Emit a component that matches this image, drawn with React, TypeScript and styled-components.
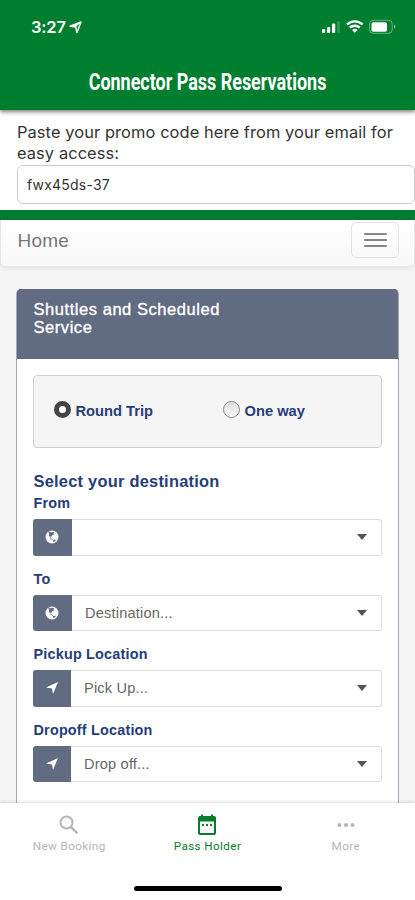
import React from 'react';
import styled, { createGlobalStyle } from 'styled-components';

const Global = createGlobalStyle`
  * { box-sizing: border-box; }
  body { margin: 0; background: #fff; font-family: "Liberation Sans", Arial, sans-serif; }
`;

const Screen = styled.div`
  width: 415px;
  height: 900px;
  display: flex;
  flex-direction: column;
  overflow: hidden;
  background: #f5f5f5;
`;

const Header = styled.header`
  flex: 0 0 110px;
  background: #007e2f;
  color: #fff;
  box-shadow: 0 2px 4px rgba(0, 0, 0, 0.5);
  z-index: 1;
`;

const StatusBar = styled.div`
  height: 54px;
  padding: 0 18px 0 31px;
  display: flex;
  align-items: center;
`;

const Clock = styled.span`
  font: 600 16.5px/20px Inter, sans-serif;
  letter-spacing: -0.2px;
  width: 38px;
  white-space: nowrap;
`;

const StatusIcons = styled.div`
  margin-left: auto;
  display: flex;
`;

const Title = styled.h1`
  margin: 12px 0 0;
  text-align: center;
  font: 700 24px/32px Roboto, sans-serif;
  white-space: nowrap;
  transform: scaleX(0.748);
`;

const Promo = styled.section`
  flex: 0 0 100px;
  padding: 12px 0 0 17px;
  background: #fff;
`;

const PromoLabel = styled.label`
  display: block;
  height: 43px;
  font: 400 16.4px/21px Inter, sans-serif;
  letter-spacing: 0.1px;
  color: #333;
  white-space: nowrap;
`;

const PromoInput = styled.div`
  height: 39px;
  padding-left: 9px;
  border: 1px solid #ccc;
  border-radius: 6px;
  font: 400 14px/38px Inter, sans-serif;
  letter-spacing: 0.2px;
  color: #333;
`;

const Divider = styled.div`
  flex: 0 0 10px;
  background: #007e2f;
`;

const Navbar = styled.nav`
  flex: 0 0 47px;
  display: flex;
  align-items: flex-start;
  justify-content: space-between;
  padding: 2px 15px 0 16.5px;
  border: solid #e7e7e7;
  border-width: 0 1px 1px;
  border-radius: 0 0 4px 4px;
  background: linear-gradient(#fff, #f8f8f8);
  box-shadow: 0 1px 5px rgba(0, 0, 0, 0.08);
`;

const Brand = styled.span`
  font-size: 19px;
  line-height: 38px;
  letter-spacing: 0.25px;
  color: #777;
`;

const MenuButton = styled.button`
  width: 48px;
  height: 36px;
  padding: 0;
  display: flex;
  flex-direction: column;
  align-items: center;
  justify-content: center;
  gap: 4px;
  border: 1px solid #e4e4e4;
  border-radius: 5px;
  background: transparent;
`;

const MenuLine = styled.span`
  width: 23px;
  height: 2px;
  border-radius: 1px;
  background: #858585;
`;

const Panel = styled.main`
  flex: 1 1 0;
  min-height: 0;
  margin: 22px 16px 0;
  border: solid #a3a6b8;
  border-width: 0 1px;
  border-radius: 5px 5px 0 0;
  background: linear-gradient(#616b82 70px, #fff 70px);
  overflow: hidden;
`;

const PanelHeading = styled.h2`
  height: 70px;
  margin: 0;
  padding: 11px 16px 0 16.5px;
  background: #616b82;
  color: #fff;
  font: 400 16.5px/18px "Liberation Sans", Arial, sans-serif;
  letter-spacing: 0.55px;
  -webkit-text-stroke: 0.35px #fff;
`;

const PanelBody = styled.div`
  padding: 16px 16px 0;
`;

const TripWell = styled.div`
  height: 73px;
  display: flex;
  align-items: center;
  padding: 0 0 2px 20px;
  border: 1px solid #d0d0d0;
  border-radius: 4px;
  background: #f5f5f5;
`;

const TripOption = styled.label<{ $width: number }>`
  width: ${p => p.$width}px;
  display: flex;
  align-items: center;
  gap: 4.5px;
  color: #263e78;
  font: 700 14.7px/18px "Liberation Sans", Arial, sans-serif;
  white-space: nowrap;
`;

const Radio = styled.span<{ $on?: boolean }>`
  width: 17px;
  height: 17px;
  margin-top: -3px;
  border-radius: 50%;
  border: ${p => (p.$on ? '5px solid #444' : '1px solid #888')};
  background: ${p => (p.$on ? '#fff' : 'linear-gradient(#ddd, #fafafa)')};
`;

const SectionTitle = styled.h3`
  margin: 23px 0 1px;
  padding-left: 0.5px;
  color: #263e78;
  font: 700 16.4px/20px "Liberation Sans", Arial, sans-serif;
  letter-spacing: 0.25px;
`;

const Field = styled.div`
  height: 75.6px;
`;

const FieldLabel = styled.div`
  height: 27px;
  padding: 2px 0 0 0.5px;
  color: #263e78;
  font: 700 14.4px/18px "Liberation Sans", Arial, sans-serif;
  letter-spacing: 0.2px;
`;

const SelectBox = styled.div`
  height: 36.5px;
  display: flex;
  align-items: center;
  border: 1px solid #ddd;
  border-left: 0;
  border-radius: 3px;
`;

const Addon = styled.span<{ $width: number }>`
  width: ${p => p.$width}px;
  height: 36.5px;
  margin: -1px 0;
  flex: none;
  display: flex;
  align-items: center;
  justify-content: center;
  border-radius: 3px 0 0 3px;
  background: #616b82;
`;

const Placeholder = styled.span`
  flex: 1;
  padding-left: 13.5px;
  color: #666;
  font-size: 14.6px;
  letter-spacing: 0.18px;
`;

const Caret = styled.span`
  margin-right: 14px;
  border: solid transparent;
  border-top-color: #555;
  border-width: 6px 5px 0;
`;

const TabBar = styled.footer`
  flex: 0 0 97px;
  display: flex;
  flex-direction: column;
  align-items: center;
  background: #fff;
  box-shadow: 0 -1px 3px rgba(0, 0, 0, 0.14);
  z-index: 1;
`;

const Tabs = styled.div`
  width: 100%;
  height: 83px;
  display: grid;
  grid-template-columns: repeat(3, 1fr);
`;

const Tab = styled.div<{ $active?: boolean }>`
  display: flex;
  flex-direction: column;
  align-items: center;
  padding-top: 10px;
  color: ${p => (p.$active ? '#087c2e' : '#b5b5b5')};
  font: 400 11.7px/14px Roboto, sans-serif;
  letter-spacing: 0.4px;
`;

const TabIcon = styled.svg`
  width: 24px;
  height: 24px;
  margin-bottom: 2px;
`;

const HomeIndicator = styled.div`
  width: 148px;
  height: 5px;
  border-radius: 3px;
  background: #000;
`;

const Globe = () => (
  <svg width="14" height="14" viewBox="0 0 14 14">
    <circle cx="7" cy="7" r="6.5" fill="#fff" />
    <path d="M3.2 2.4 5 1.4l1 1 1.8-.7 1.9 1.1-1.3.8.8 1-1.9.5-.4 1.4-1.2-.3-.3 1.2 1.6 1.1 1.2 1.7-1-.5-1.8-1.4-.7-1.6-1.1-1.6.7-1.2z" fill="#616b82" />
    <path d="m8 10.3 1.7-.8 1.2.4-1 1.5-1.7.7z" fill="#616b82" />
  </svg>
);

const Arrow = () => (
  <svg width="14" height="14" viewBox="0 0 14 14">
    <path d="M13 1 8 13 7 7.5 1 6.6z" fill="#fff" />
  </svg>
);

const fields = [
  { label: 'From', text: '', globe: true },
  { label: 'To', text: 'Destination...', globe: true },
  { label: 'Pickup Location', text: 'Pick Up...', globe: false },
  { label: 'Dropoff Location', text: 'Drop off...', globe: false },
];

export default function App() {
  return (
    <Screen>
      <Global />
      <Header>
        <StatusBar>
          <Clock>3:27</Clock>
          <svg width="13" height="13" viewBox="0 0 13 13">
            <path d="M12 1 7.8 11.7 6.8 6 1 5.2z" fill="none" stroke="#fff" strokeWidth="1.4" strokeLinejoin="round" />
            <path d="M12 1 1 5.2l5.8.8z" fill="#fff" />
          </svg>
          <StatusIcons>
            <svg width="75" height="16" viewBox="0 0 75 16">
              <g fill="#fff">
                <rect x="0" y="10" width="3.2" height="4" rx="1" />
                <rect x="5" y="8" width="3.2" height="6" rx="1" />
                <rect x="10" y="4.5" width="3.2" height="9.5" rx="1" />
                <rect x="15" y="2" width="3" height="12" rx="1" opacity=".18" />
                <path d="m32.8 13.8-2.8-2.7a4 4 0 0 1 5.6 0z" />
                <rect x="49.5" y="3.2" width="15.5" height="9.5" rx="1.8" />
              </g>
              <path d="M25 5.5a11.2 11.2 0 0 1 15.6 0M27.8 8.7a7.2 7.2 0 0 1 10 0" fill="none" stroke="#fff" strokeWidth="2.4" />
              <rect x="47.6" y="1.3" width="22.6" height="13" rx="3.6" fill="none" stroke="#fff" strokeOpacity=".4" />
              <path d="M72 5.5q3 2.2 0 4.4z" fill="#fff" opacity=".5" />
            </svg>
          </StatusIcons>
        </StatusBar>
        <Title>Connector Pass Reservations</Title>
      </Header>

      <Promo>
        <PromoLabel>
          Paste your promo code here from your email for<br />easy access:
        </PromoLabel>
        <PromoInput>fwx45ds-37</PromoInput>
      </Promo>
      <Divider />

      <Navbar>
        <Brand>Home</Brand>
        <MenuButton aria-label="Menu">
          <MenuLine /><MenuLine /><MenuLine />
        </MenuButton>
      </Navbar>

      <Panel>
        <PanelHeading>Shuttles and Scheduled<br />Service</PanelHeading>
        <PanelBody>
          <TripWell>
            <TripOption $width={169}><Radio $on />Round Trip</TripOption>
            <TripOption $width={100}><Radio />One way</TripOption>
          </TripWell>
          <SectionTitle>Select your destination</SectionTitle>
          {fields.map(f => (
            <Field key={f.label}>
              <FieldLabel>{f.label}</FieldLabel>
              <SelectBox>
                <Addon $width={f.globe ? 38.5 : 37.5}>{f.globe ? <Globe /> : <Arrow />}</Addon>
                <Placeholder>{f.text}</Placeholder>
                <Caret />
              </SelectBox>
            </Field>
          ))}
        </PanelBody>
      </Panel>

      <TabBar>
        <Tabs>
          <Tab>
            <TabIcon viewBox="0 0 24 24">
              <circle cx="9.5" cy="9.5" r="6" fill="none" stroke="currentColor" strokeWidth="2" />
              <path d="m13.8 13.8 6.7 6.7" stroke="currentColor" strokeWidth="2.4" />
            </TabIcon>
            New Booking
          </Tab>
          <Tab $active>
            <TabIcon viewBox="0 0 24 24">
              <path d="M5 3h1V1.5h2V3h8V1.5h2V3h1a2 2 0 0 1 2 2v15a2 2 0 0 1-2 2H5a2 2 0 0 1-2-2V5a2 2 0 0 1 2-2zm0 5.5V20h14V8.5z" fill="currentColor" />
              <path d="M7 11h2v2H7zm4 0h2v2h-2zm4 0h2v2h-2z" fill="currentColor" />
            </TabIcon>
            Pass Holder
          </Tab>
          <Tab>
            <TabIcon viewBox="0 0 24 24">
              <g fill="currentColor">
                <circle cx="5.5" cy="12" r="2" />
                <circle cx="12" cy="12" r="2" />
                <circle cx="18.5" cy="12" r="2" />
              </g>
            </TabIcon>
            More
          </Tab>
        </Tabs>
        <HomeIndicator />
      </TabBar>
    </Screen>
  );
}
